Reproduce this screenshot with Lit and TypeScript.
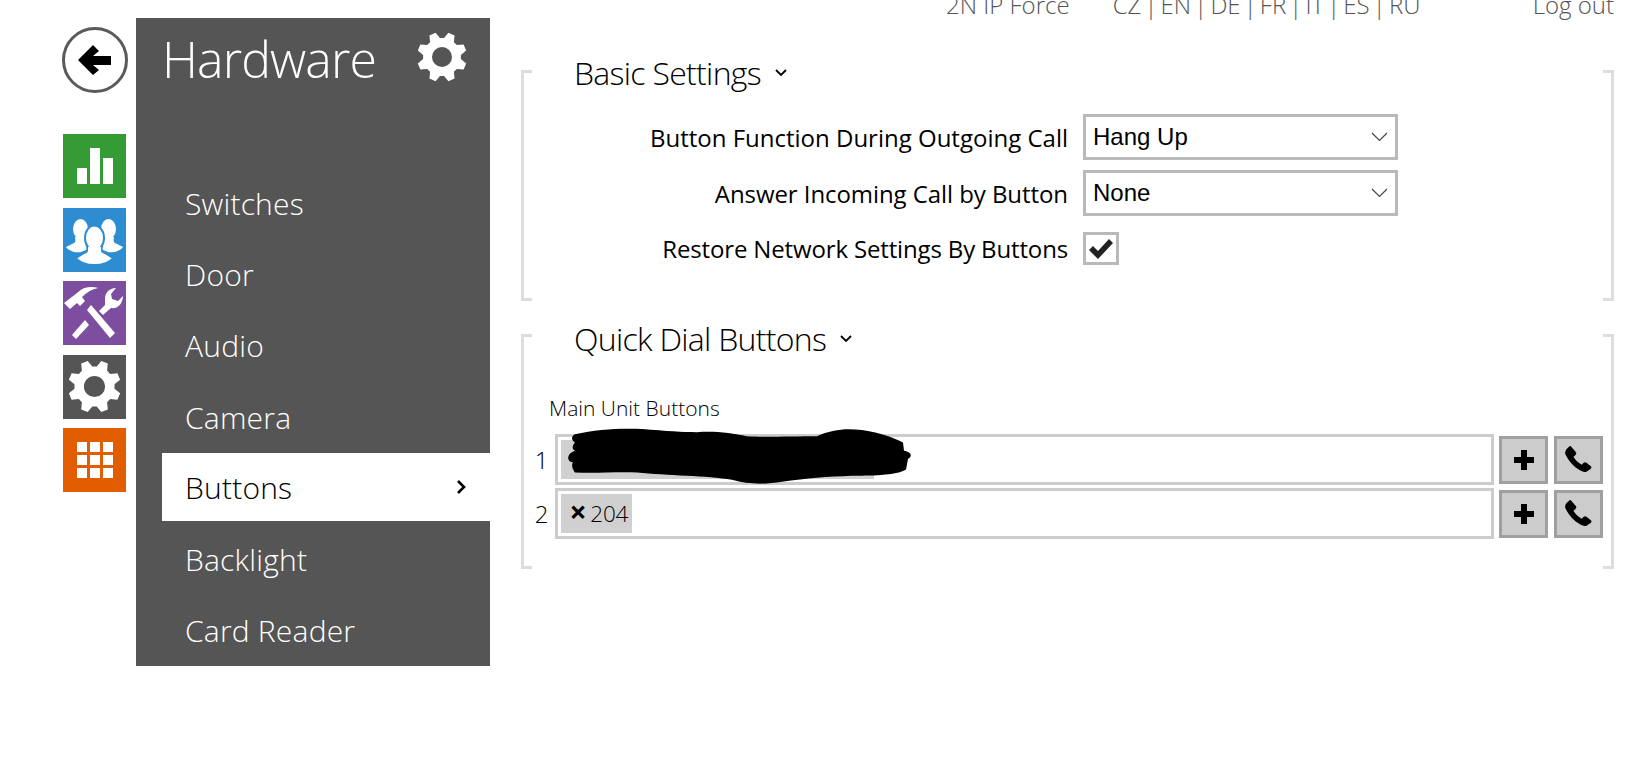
import { LitElement, html, css } from "lit";
import { customElement } from "lit/decorators.js";

function gearPath(cx: number, cy: number, ro: number, rr: number, hole: number) {
  const n = 8;
  const pts: string[] = [];
  for (let i = 0; i < n; i++) {
    const base = (i * 2 * Math.PI) / n - Math.PI / 2 + Math.PI / n;
    const w = Math.PI / n;
    const a = [
      [rr, base - w * 0.72],
      [ro, base - w * 0.34],
      [ro, base + w * 0.34],
      [rr, base + w * 0.72],
    ];
    for (const [r, t] of a) {
      const x = cx + r * Math.cos(t);
      const y = cy + r * Math.sin(t);
      pts.push(`${pts.length ? "L" : "M"}${x.toFixed(2)} ${y.toFixed(2)}`);
    }
  }
  const h = `M${cx + hole} ${cy}A${hole} ${hole} 0 1 0 ${cx - hole} ${cy}A${hole} ${hole} 0 1 0 ${cx + hole} ${cy}Z`;
  return pts.join("") + "Z" + h;
}

const gear = (size: number, cls = "") => html`<svg class=${cls} width=${size} height=${size} viewBox="0 0 100 100" aria-hidden="true">
  <path fill="#fff" fill-rule="evenodd" d=${gearPath(50, 50, 50, 38, 20)}></path>
</svg>`;

const phone = html`<svg class="ph" width="28" height="28" viewBox="0 0 30 30" aria-hidden="true">
  <path fill="#000" d="M6 0 12 7Q12.5 8.5 11 10L9 11.5C11 15 14 18 18 20L20 18Q21.5 17 23 18L28 22Q29 23.5 27 25L23 27.5Q20 28.5 16 26C9 22 4 16 .5 9Q-.5 6 1.5 3.5L4 1Q5 0 6 0Z"></path>
</svg>`;

const plus = html`<svg width="20" height="20" viewBox="0 0 20 20" aria-hidden="true">
  <path fill="#000" d="M7 0h6v7h7v6h-7v7H7v-7H0V7h7z"></path>
</svg>`;

const caret = html`<svg width="12" height="8" viewBox="0 0 12 8" aria-hidden="true">
  <path fill="none" stroke="#000" stroke-width="1.8" d="M1 1l5 5 5-5"></path>
</svg>`;

const selCaret = html`<svg width="17" height="10" viewBox="0 0 17 10" aria-hidden="true"><path fill="none" stroke="#444" stroke-width="1.2" d="M1 1l7.5 7.5L16 1"></path></svg>`;

const menu = ["Switches", "Door", "Audio", "Camera", "Buttons", "Backlight", "Card Reader"];

@customElement("app-root")
export class AppRoot extends LitElement {
  static styles = css`
    :host {
      display: block;
      width: 1632px;
      height: 777px;
      overflow: hidden;
      background: #fff;
      font-family: "Open Sans", "Noto Sans", sans-serif;
      color: #000;
    }
    .page {
      display: grid;
      grid-template-columns: 62px 66px 8px 354px 1fr;
      align-items: start;
    }
    .rail {
      grid-column: 2;
      padding-top: 27px;
      display: flex;
      flex-direction: column;
      align-items: flex-start;
    }
    .back {
      width: 66px;
      height: 66px;
      box-sizing: border-box;
      border: 3px solid #5a5a5a;
      border-radius: 50%;
      display: flex;
      align-items: center;
      justify-content: center;
      background: #fff;
    }
    .tiles {
      margin-top: 41px;
      margin-left: 1px;
      display: flex;
      flex-direction: column;
      gap: 9.5px;
    }
    .tile {
      width: 63px;
      height: 64px;
      display: flex;
      align-items: center;
      justify-content: center;
    }
    .green { background: #359b34; }
    .blue { background: #2d8dd0; }
    .purple { background: #7d4e9f; }
    .gray { background: #555; }
    .orange { background: #e25c00; }
    .panel {
      grid-column: 4;
      margin-top: 18px;
      height: 648px;
      background: #555;
      color: #fff;
      display: flex;
      flex-direction: column;
    }
    .panel-head {
      height: 93px;
      padding: 0 23px 0 26px;
      display: flex;
      align-items: center;
      justify-content: space-between;
    }
    .panel-title {
      font-size: 50px;
      font-weight: 300;
      line-height: 1;
      letter-spacing: -0.9px;
      margin-top: -10px;
    }
    .head-gear { margin-top: -15px; }
    .menu {
      list-style: none;
      margin: 57px 0 0;
      padding: 0 0 0 26px;
    }
    .menu li {
      height: 71.3px;
      display: flex;
      align-items: center;
      justify-content: space-between;
      padding: 0 24px 0 23px;
      font-size: 30px;
      font-weight: 300;
      letter-spacing: 0.2px;
    }
    .menu li.active {
      background: #fff;
      color: #000;
      height: 68px;
      margin: 0.5px 0 2px;
    }
    .main {
      grid-column: 5;
      padding: 0 18px 0 31px;
    }
    .top {
      height: 18px;
      margin-top: -8px;
      display: flex;
      font-size: 24px;
      font-weight: 300;
      line-height: 26px;
      color: #555;
    }
    .top .model { margin-left: 425px; }
    .top .langs { margin-left: 43px; word-spacing: -3.1px; }
    .top .logout { margin-left: auto; }
    .section {
      position: relative;
      box-sizing: border-box;
    }
    .basic { margin-top: 60px; height: 231px; }
    .quick { margin-top: 33px; height: 235px; }
    .bracket {
      position: absolute;
      top: 0;
      bottom: 0;
      width: 8px;
      border: 3px solid #ddd;
    }
    .bracket.l { left: 0; border-right: 0; }
    .bracket.r { right: 0; border-left: 0; }
    .sec-title {
      margin: 0;
      padding-left: 53px;
      font-size: 32px;
      font-weight: 300;
      line-height: 40px;
      letter-spacing: -0.7px;
      display: flex;
      align-items: center;
      gap: 14px;
    }
    .basic .sec-title { position: relative; top: -17px; }
    .quick .sec-title { position: relative; top: -15px; }
    .rows {
      display: flex;
      flex-direction: column;
      position: relative;
      margin-top: 4px;
    }
    .row {
      display: flex;
      align-items: center;
      justify-content: flex-end;
      width: 877px;
      gap: 15px;
    }
    .row label {
      font-size: 24px;
      font-weight: 400;
    }
    .r2 label { letter-spacing: -0.07px; }
    .r3 label { letter-spacing: -0.15px; }
    .select {
      box-sizing: border-box;
      width: 315px;
      height: 46px;
      border: 3px solid #b9b9b9;
      padding: 0 7px;
      display: flex;
      align-items: center;
      justify-content: space-between;
      font-family: "Liberation Sans", Arial, sans-serif;
      font-size: 24px;
    }
    .r1 { margin-top: 0; height: 46px; }
    .r2 { margin-top: 10px; height: 46px; }
    .r3 { margin-top: 16px; height: 33px; }
    .r3 .spacer { width: 315px; display: flex; }
    .check {
      box-sizing: border-box;
      width: 36px;
      height: 33px;
      border: 3px solid #b9b9b9;
      display: flex;
      align-items: center;
      justify-content: center;
    }
    .unit {
      margin: 21px 0 0;
      padding-left: 28px;
      font-size: 21px;
      font-weight: 300;
      line-height: 26px;
    }
    .dial {
      display: grid;
      grid-template-columns: 33.5px 939.5px 5px 49px 6px 49px;
      align-items: center;
      margin-top: 13px;
    }
    .dial + .dial { margin-top: 3px; }
    .num {
      font-size: 24px;
      font-weight: 300;
      text-align: right;
      padding-right: 6px;
    }
    .field {
      box-sizing: border-box;
      height: 51px;
      border: 3px solid #ccc;
      padding: 3px;
      display: flex;
      align-items: stretch;
    }
    .tag {
      background: #d0d0d0;
      display: flex;
      align-items: center;
      gap: 4px;
      padding: 0 4px 0 9px;
      font-size: 22.5px;
      font-weight: 300;
      letter-spacing: -0.3px;
    }
    .tag.wide { width: 300px; }
    .tag b { font-size: 30px; font-weight: 700; line-height: 1; margin-top: -4px; }
    .sq {
      box-sizing: border-box;
      width: 49px;
      height: 48px;
      border: 3px solid #a0a0a0;
      background: #ccc;
      display: flex;
      align-items: center;
      justify-content: center;
    }
    .ph { overflow: visible; }
    .blot {
      position: absolute;
      left: 46px;
      top: 94px;
    }
  `;

  render() {
    return html`
      <div class="page">
        <div class="rail">
          <div class="back">
            <svg width="34" height="30" viewBox="0 0 34 30" aria-hidden="true">
              <path fill="#000" d="M15 0 21 6 15 11H33V20H15L21 25 15 30 0 15Z"></path>
            </svg>
          </div>
          <div class="tiles">
            <div class="tile green">
              <svg width="36" height="36" viewBox="0 0 36 36" aria-hidden="true">
                <path fill="#fff" d="M0 20h10v16H0zM13 0h10v36H13zM26 10h10v26H26z"></path>
              </svg>
            </div>
            <div class="tile blue">
              <svg width="63" height="64" viewBox="0 0 63 64" aria-hidden="true">
                <g fill="#fff">
                  <ellipse cx="17.5" cy="21" rx="7.5" ry="10"></ellipse>
                  <path d="M12 29C13 34 12 35 9 36L3 39C6 43 12 45 18 44L28 40 23 29Z"></path>
                  <ellipse cx="45.5" cy="21" rx="7.5" ry="10"></ellipse>
                  <path d="M51 29C50 34 51 35 54 36L60 39C57 43 51 45 45 44L35 40 40 29Z"></path>
                </g>
                <g fill="#fff" stroke="#2d8dd0" stroke-width="2">
                  <path d="M24 38C25 43 24 44 21 45L13 50C17 55 24 57 31.5 57S46 55 50 50L42 45C39 44 38 43 39 38Z"></path>
                  <ellipse cx="31.5" cy="30" rx="9.5" ry="12.5"></ellipse>
                </g>
                <path fill="#fff" d="M25 39h13v5H25z"></path>
              </svg>
            </div>
            <div class="tile purple">
              <svg width="63" height="64" viewBox="0 0 63 64" aria-hidden="true">
                <path fill="#fff" d="M1 22 14 12C18 8 22 6 27 6 30 6 33 6 35 7 29 8 24 11 19 16L22 20 17 25 14 22 7 28Z"></path>
                <path fill="#fff" d="M24 29 28 24 52 52 47 57Z"></path>
                <path fill="#fff" d="M9 54 22 39 26 44 13 58Z"></path>
                <path fill="#fff" d="M36 30 40 34 48 27C54 28 59 24 60 16V15L55 20 49 18 48 13 53 7C46 7 42 12 42 18V24Z"></path>
              </svg>
            </div>
            <div class="tile gray">${gear(53)}</div>
            <div class="tile orange">
              <svg width="36" height="36" viewBox="0 0 36 36" aria-hidden="true">
                <path fill="#fff" d="M0 0h10v10H0zM13 0h10v10H13zM26 0h10v10H26zM0 13h10v10H0zM13 13h10v10H13zM26 13h10v10H26zM0 26h10v10H0zM13 26h10v10H13zM26 26h10v10H26z"></path>
              </svg>
            </div>
          </div>
        </div>

        <nav class="panel">
          <div class="panel-head">
            <span class="panel-title">Hardware</span>
            ${gear(50, "head-gear")}
          </div>
          <ul class="menu">
            ${menu.map(
              (m) => html`<li class=${m === "Buttons" ? "active" : ""}>
                <span>${m}</span>
                ${m === "Buttons"
                  ? html`<svg width="10" height="14" viewBox="0 0 10 14" aria-hidden="true">
                      <path fill="none" stroke="#000" stroke-width="2.6" d="M2 1l6 6-6 6"></path>
                    </svg>`
                  : ""}
              </li>`
            )}
          </ul>
        </nav>

        <main class="main">
          <div class="top">
            <span class="model">2N IP Force</span>
            <span class="langs">CZ | EN | DE | FR | IT | ES | RU</span>
            <span class="logout">Log out</span>
          </div>

          <section class="section basic">
            <div class="bracket l"></div>
            <div class="bracket r"></div>
            <h2 class="sec-title">Basic Settings ${caret}</h2>
            <div class="rows">
              <div class="row r1">
                <label>Button Function During Outgoing Call</label>
                <div class="select"><span>Hang Up</span>${selCaret}</div>
              </div>
              <div class="row r2">
                <label>Answer Incoming Call by Button</label>
                <div class="select"><span>None</span>${selCaret}</div>
              </div>
              <div class="row r3">
                <label>Restore Network Settings By Buttons</label>
                <div class="spacer">
                  <div class="check">
                    <svg width="24" height="20" viewBox="0 0 24 20" aria-hidden="true"><path fill="#222" d="M0 11 4 7 9 12 20 0 24 4 9 20Z"></path></svg>
                  </div>
                </div>
              </div>
            </div>
          </section>

          <section class="section quick">
            <div class="bracket l"></div>
            <div class="bracket r"></div>
            <h2 class="sec-title">Quick Dial Buttons ${caret}</h2>
            <p class="unit">Main Unit Buttons</p>
            <div class="dial">
              <span class="num">1</span>
              <div class="field"><span class="tag wide"></span></div>
              <span></span>
              <div class="sq">${plus}</div>
              <span></span>
              <div class="sq">${phone}</div>
            </div>
            <div class="dial">
              <span class="num">2</span>
              <div class="field"><span class="tag"><b>×</b>204</span></div>
              <span></span>
              <div class="sq">${plus}</div>
              <span></span>
              <div class="sq">${phone}</div>
            </div>
            <svg class="blot" width="346" height="58" viewBox="0 0 346 56" preserveAspectRatio="none" aria-hidden="true">
              <path fill="#000" d="M8 6C30 1 55 0 75 1 100 3 115 4 130 4 150 3 165 5 180 8 195 9 225 8 250 8 265 1 280 0 295 2 315 5 325 9 336 14L337 22C344 23 346 27 341 30L339 40C330 46 300 46 285 46 260 47 240 48 215 52 195 55 180 54 165 50 140 46 100 46 70 43 50 42 30 44 8 43 4 38 5 34 6 33 2 33 0 30 2 26 3 24 6 23 8 22 4 20 6 16 8 14 4 12 4 8 8 6Z"></path>
            </svg>
          </section>
        </main>
      </div>
    `;
  }
}
